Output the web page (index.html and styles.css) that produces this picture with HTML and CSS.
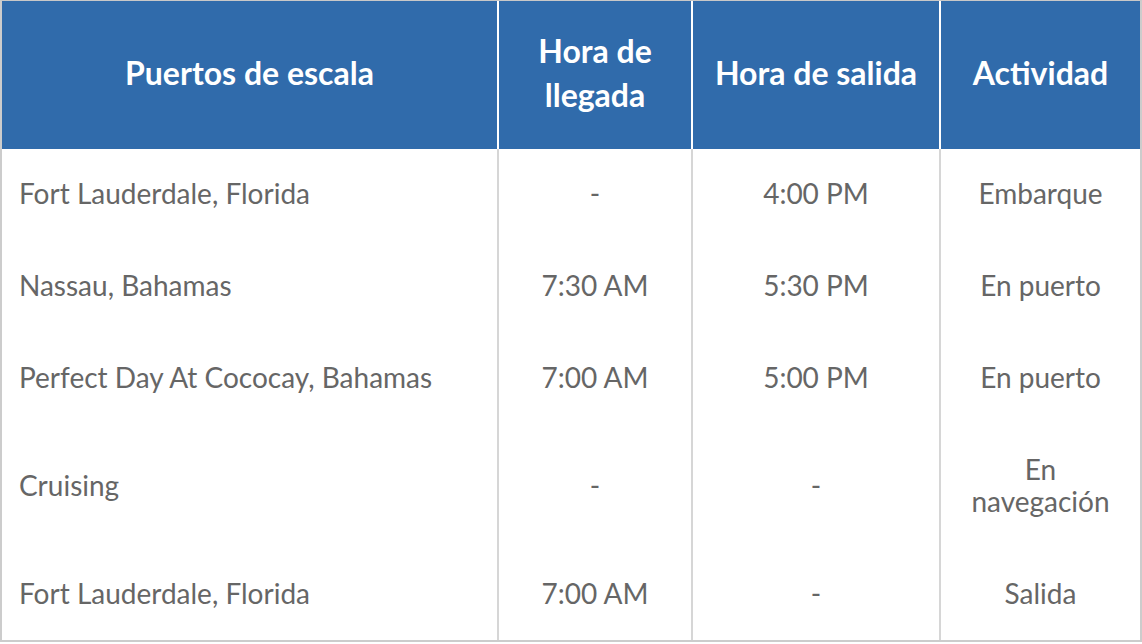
FILE: index.html
```html
<!DOCTYPE html>
<html lang="es">
<head>
<meta charset="utf-8">
<title>Itinerario</title>
<link rel="stylesheet" href="styles.css">
</head>
<body>
<table class="itinerary">
  <colgroup>
    <col class="c1"><col class="c2"><col class="c3"><col class="c4">
  </colgroup>
  <thead>
    <tr>
      <th>Puertos de escala</th>
      <th>Hora de llegada</th>
      <th>Hora de salida</th>
      <th>Actividad</th>
    </tr>
  </thead>
  <tbody>
    <tr><td class="port">Fort Lauderdale, Florida</td><td>-</td><td>4:00 PM</td><td>Embarque</td></tr>
    <tr><td class="port">Nassau, Bahamas</td><td>7:30 AM</td><td>5:30 PM</td><td>En puerto</td></tr>
    <tr><td class="port">Perfect Day At Cococay, Bahamas</td><td>7:00 AM</td><td>5:00 PM</td><td>En puerto</td></tr>
    <tr class="tall"><td class="port">Cruising</td><td>-</td><td>-</td><td>En navegación</td></tr>
    <tr class="last"><td class="port">Fort Lauderdale, Florida</td><td>7:00 AM</td><td>-</td><td>Salida</td></tr>
  </tbody>
</table>
</body>
</html>
```
FILE: styles.css
```css
html, body {
  margin: 0;
  padding: 0;
  background: #ffffff;
}

.itinerary {
  width: 1142px;
  table-layout: fixed;
  border-collapse: separate;
  border-spacing: 0;
  border-top: 1px solid #c8c8c8;
  border-left: 2px solid #cccccc;
  border-right: 2px solid #cccccc;
  border-bottom: 2px solid #cccccc;
  font-family: Lato, "Open Sans", sans-serif;
}

.c1 { width: 495px; }
.c2 { width: 194px; }
.c3 { width: 248px; }
.c4 { width: 201px; }

.itinerary th {
  box-sizing: border-box;
  background: #306bab;
  color: #ffffff;
  font-weight: 700;
  font-size: 32px;
  line-height: 44px;
  padding: 28px 12px 32px;
  text-align: center;
  vertical-align: middle;
  border-left: 2px solid #ffffff;
}

.itinerary th:first-child {
  border-left: none;
}

.itinerary td {
  box-sizing: border-box;
  color: #666666;
  font-size: 28px;
  font-weight: 400;
  line-height: 32px;
  padding: 28px 12px 32px;
  text-align: center;
  vertical-align: middle;
  border-left: 2px solid #d6d6d6;
}

.itinerary td:first-child {
  border-left: none;
}

.itinerary td.port {
  text-align: left;
  padding-left: 17px;
}

.itinerary tr.tall td {
  padding-top: 28px;
  padding-bottom: 31px;
}

.itinerary tr.last td {
  padding-top: 29px;
  padding-bottom: 31px;
}
```
